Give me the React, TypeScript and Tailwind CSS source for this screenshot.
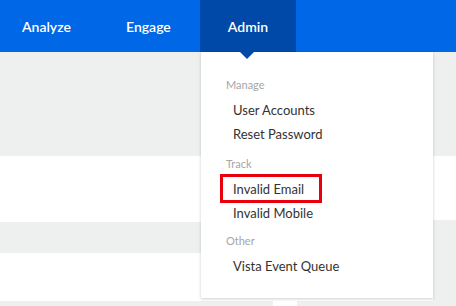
const sections = [
  { title: 'Manage', items: ['User Accounts', 'Reset Password'], gap: 'mb-[9px]' },
  { title: 'Track', items: ['Invalid Email', 'Invalid Mobile'], gap: 'mb-[7px]' },
  { title: 'Other', items: ['Vista Event Queue'], gap: '' },
];

export default function App() {
  return (
    <div className="relative w-[456px] h-[306px] overflow-hidden bg-[#eef0ef] font-['Lato',sans-serif]">
      <nav className="flex h-[52px] bg-[#0067e6] text-white text-[14px] font-semibold">
        <div className="w-[100px] pl-[22px] flex items-center">Analyze</div>
        <div className="w-[100px] pl-[26px] flex items-center">Engage</div>
        <div className="relative w-[96px] flex items-center justify-center bg-[#0049a8]">
          Admin
          <div className="absolute left-[40px] top-[52px] z-20 w-0 h-0 border-l-[7px] border-r-[7px] border-t-[7px] border-l-transparent border-r-transparent border-t-[#0049a8]" />
        </div>
      </nav>

      <div className="flex">
        <div className="flex-1 flex flex-col">
          <div className="h-[104px] bg-[#eef0ef]" />
          <div className="h-[66px] bg-white" />
          <div className="h-[31px] bg-[#eef0ef]" />
          <div className="h-[48px] bg-white" />
          <div className="flex h-[5px]">
            <div className="w-[273px] bg-[#eef0ef]" />
            <div className="w-[24px] bg-white" />
            <div className="flex-1 bg-[#eef0ef]" />
          </div>
        </div>
        <div className="w-[23px] flex flex-col">
          <div className="h-[104px] bg-[#eef0ef]" />
          <div className="h-[64px] bg-white" />
          <div className="flex-1 bg-[#eef0ef]" />
        </div>
      </div>

      <div className="absolute left-[201px] top-[52px] z-10 w-[232px] h-[246px] bg-white shadow-[0_1px_3px_rgba(0,0,0,0.2)] pt-[24px] pl-[25px]">
        {sections.map((s) => (
          <div key={s.title} className={s.gap}>
            <div className="text-[11px] leading-[18px] text-[#a6a6a6] mb-[4px]">{s.title}</div>
            {s.items.map((item) => (
              <div key={item} className="relative pl-[7px] text-[13px] leading-[24px] text-[#333]">
                {item === 'Invalid Email' && (
                  <div className="absolute left-[-6px] top-[-3px] w-[102px] h-[29px] border-[3px] border-[#e8000b]" />
                )}
                {item}
              </div>
            ))}
          </div>
        ))}
      </div>
    </div>
  );
}
